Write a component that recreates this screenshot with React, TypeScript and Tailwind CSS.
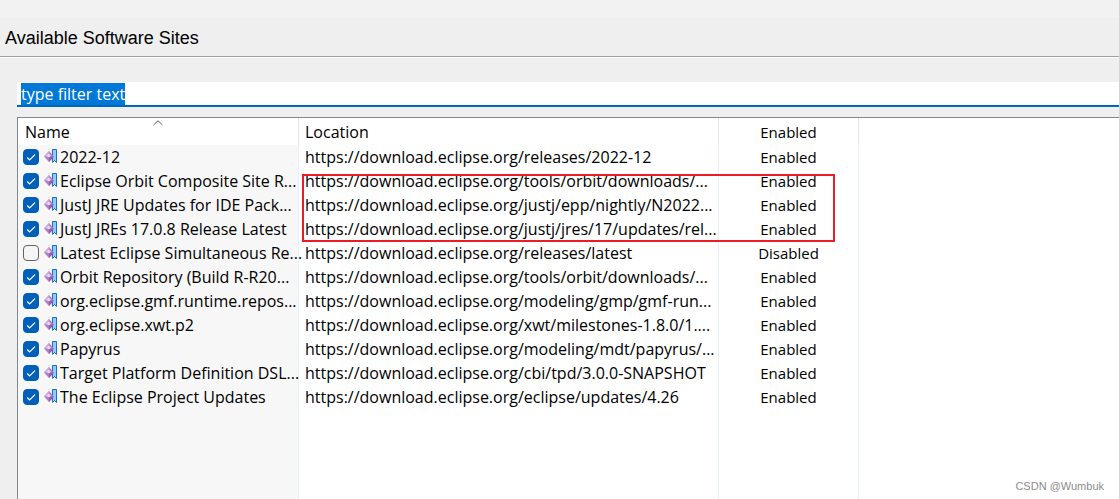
import { useEffect, useRef, useState } from 'react'

interface Site {
  name: string
  location: string
  enabled: boolean
}

const initialSites: Site[] = [
  { name: '2022-12', location: 'https://download.eclipse.org/releases/2022-12', enabled: true },
  { name: 'Eclipse Orbit Composite Site R...', location: 'https://download.eclipse.org/tools/orbit/downloads/...', enabled: true },
  { name: 'JustJ JRE Updates for IDE Pack...', location: 'https://download.eclipse.org/justj/epp/nightly/N2022...', enabled: true },
  { name: 'JustJ JREs 17.0.8 Release Latest', location: 'https://download.eclipse.org/justj/jres/17/updates/rel...', enabled: true },
  { name: 'Latest Eclipse Simultaneous Re...', location: 'https://download.eclipse.org/releases/latest', enabled: false },
  { name: 'Orbit Repository (Build R-R20...', location: 'https://download.eclipse.org/tools/orbit/downloads/...', enabled: true },
  { name: 'org.eclipse.gmf.runtime.repos...', location: 'https://download.eclipse.org/modeling/gmp/gmf-run...', enabled: true },
  { name: 'org.eclipse.xwt.p2', location: 'https://download.eclipse.org/xwt/milestones-1.8.0/1....', enabled: true },
  { name: 'Papyrus', location: 'https://download.eclipse.org/modeling/mdt/papyrus/...', enabled: true },
  { name: 'Target Platform Definition DSL...', location: 'https://download.eclipse.org/cbi/tpd/3.0.0-SNAPSHOT', enabled: true },
  { name: 'The Eclipse Project Updates', location: 'https://download.eclipse.org/eclipse/updates/4.26', enabled: true },
]

function SiteIcon() {
  return (
    <svg width="14" height="16" viewBox="0 0 14 16" className="shrink-0" aria-hidden="true">
      <path d="M9.500 .5h4v13l-2-2-2 2z" fill="#8ccbff" stroke="#1b6fc0" />
      <path d="M6 2 11 7.500 6 13 1 7.500z" fill="#b07fc6" />
      <path d="M6 2v5.500H1z" fill="#cfabdd" />
      <path d="M6 7.500h5L6 13z" fill="#8f5ea8" />
      <path d="M6 4.500 8 7 6 8.500 3.500 7z" fill="#e9d3f1" />
    </svg>
  )
}

export default function App() {
  const [sites, setSites] = useState(initialSites)
  const filterRef = useRef<HTMLInputElement>(null)

  useEffect(() => {
    filterRef.current?.focus()
    filterRef.current?.select()
  }, [])

  function toggle(index: number) {
    setSites((prev) => prev.map((s, i) => (i === index ? { ...s, enabled: !s.enabled } : s)))
  }

  return (
    <div className="flex h-screen flex-col overflow-hidden bg-[#efefef] font-['Open_Sans',sans-serif] text-base leading-6 text-black">
      <div className="h-[18px] shrink-0 bg-[#f2f2f2]" />
      <header className="shrink-0 border-b border-white">
        <h1 className="border-b border-[#a0a0a0] px-[5px] pt-2 pb-[6px] font-['Liberation_Sans',sans-serif] text-lg leading-6">
          Available Software Sites
        </h1>
      </header>

      <main className="flex min-h-0 flex-1 flex-col gap-[10px] pt-6 pl-[17px]">
        <input
          ref={filterRef}
          aria-label="Filter sites"
          defaultValue="type filter text"
          className="h-[25px] w-full shrink-0 border-b-2 border-[#0067c0] bg-white px-1 leading-5 outline-none selection:bg-[#0078d7] selection:text-white"
        />

        <div className="relative min-h-0 flex-1 border-t border-l border-[#828790] bg-white">
          <table className="h-full w-full table-fixed border-separate border-spacing-0 whitespace-nowrap">
            <colgroup>
              <col className="w-[281px]" />
              <col className="w-[420px]" />
              <col className="w-[140px]" />
              <col />
            </colgroup>
            <thead>
              <tr className="h-[27px]">
                <th className="relative border-r border-[#e5e5e5] p-0 pt-px pl-[7px] text-left font-normal">
                  <svg className="absolute top-[2px] left-1/2 -translate-x-1/2" width="10" height="6" viewBox="0 0 10 6" fill="none" stroke="#606060" aria-hidden="true">
                    <path d="M.5 5 5 .8 9.500 5" />
                  </svg>
                  Name
                </th>
                <th className="border-r border-[#e5e5e5] p-0 pt-px pl-[6px] text-left font-normal">Location</th>
                <th className="border-r border-[#e5e5e5] p-0 pt-px text-center text-[15px] font-normal">Enabled</th>
                <th className="p-0" />
              </tr>
            </thead>
            <tbody>
              {sites.map((site, i) => (
                <tr key={site.name} className="h-6">
                  <td className="border-r border-[#e6effc] bg-[#f7f7f7] p-0 pl-[5px]">
                    <label className="flex items-center">
                      <span className="relative mr-1 size-4 shrink-0">
                        <input
                          type="checkbox"
                          checked={site.enabled}
                          onChange={() => toggle(i)}
                          className="peer block size-4 appearance-none rounded border border-[#626262] bg-[#f5f5f5] checked:border-[#005fb8] checked:bg-[#005fb8]"
                        />
                        <svg className="pointer-events-none absolute inset-0 hidden peer-checked:block" width="16" height="16" viewBox="0 0 16 16" fill="none" stroke="white" strokeWidth="1.200" aria-hidden="true">
                          <path d="M4.200 8.500 6.700 11l5.300-5.300" />
                        </svg>
                      </span>
                      <SiteIcon />
                      <span className="pl-[3px]">{site.name}</span>
                    </label>
                  </td>
                  <td className="border-r border-[#e6effc] p-0 pl-[6px]">{site.location}</td>
                  <td className="border-r border-[#e6effc] p-0 text-center text-[15px]">{site.enabled ? 'Enabled' : 'Disabled'}</td>
                  <td className="p-0" />
                </tr>
              ))}
              {/* empty area below the last site */}
              <tr>
                <td className="border-r border-[#e6effc] bg-[#f7f7f7] p-0" />
                <td className="border-r border-[#e6effc] p-0" />
                <td className="border-r border-[#e6effc] p-0" />
                <td className="p-0" />
              </tr>
            </tbody>
          </table>

          <div className="pointer-events-none absolute top-14 left-[284px] h-[68px] w-[533px] border-2 border-[#ed1c24]" />
          <p className="absolute right-[15px] bottom-[5px] font-['Liberation_Sans',sans-serif] text-[11px] leading-4 text-[#8c8c8c]">CSDN @Wumbuk</p>
        </div>
      </main>
    </div>
  )
}
